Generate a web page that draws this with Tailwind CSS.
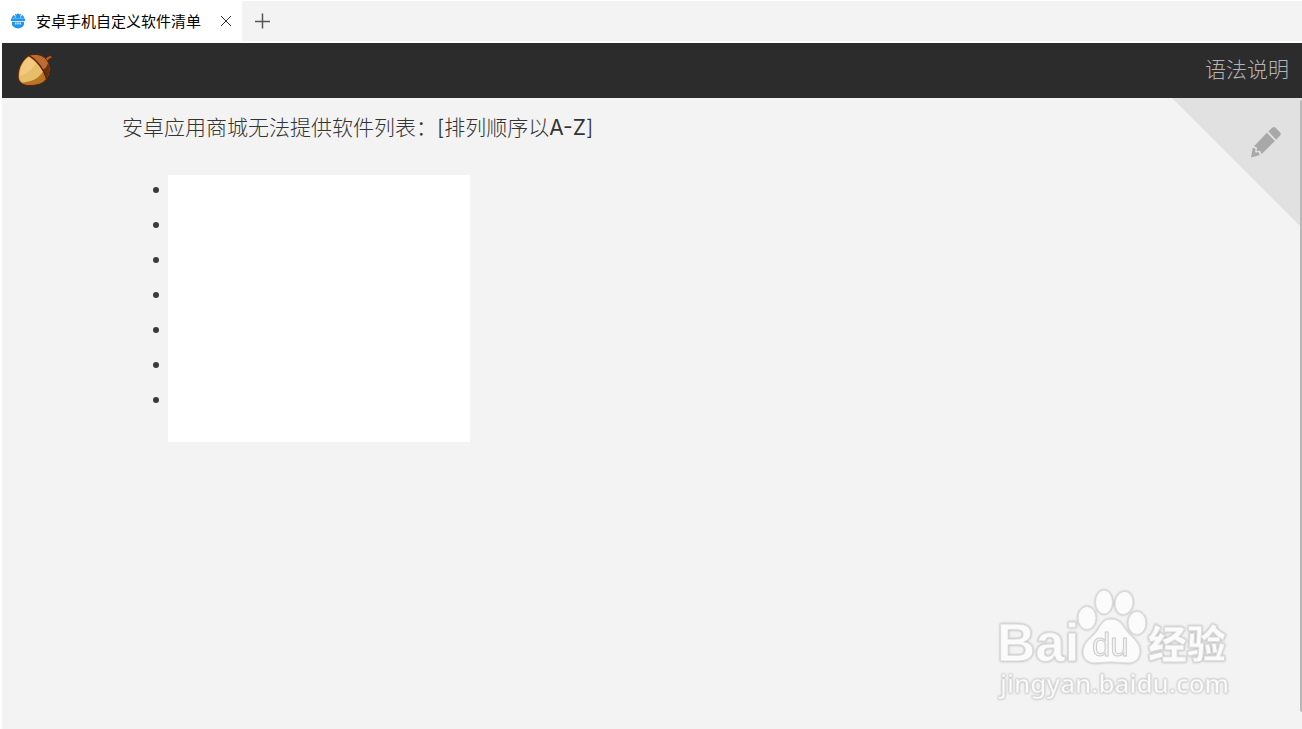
<!DOCTYPE html>
<html lang="zh-CN">
<head>
    <meta charset="UTF-8">
    <meta name="viewport" content="width=device-width, initial-scale=1.0">
    <title>安卓手机自定义软件清单</title>
    <script src="https://cdn.jsdelivr.net/npm/@tailwindcss/browser@4"></script>
</head>
<body class="flex min-h-screen flex-col bg-[#f3f3f3] border-l-2 border-white font-['Inter','Noto_Sans_CJK_SC',sans-serif]">
    <!-- Browser tabs -->
    <div class="flex h-[43px] items-stretch border-t border-b-2 border-white bg-[#f3f3f3]">
        <div class="flex w-60 items-center bg-white pl-[9px] text-[15px] text-black">
            <svg class="h-4 w-[14px]" viewBox="0 0 14 16" fill="#2196f3" aria-hidden="true">
                <path d="M1 5.500V4l1.500-2 1.300 1 .4-2.200 1.300.6L7 .2l1.500 1.200 1.300-.6.4 2.200 1.300-1L13 4v1.500z"/>
                <path d="M0 5.500h14V8H0z"/>
                <path d="M1 8.800h12v2.700C12.500 14 10 15 7 15.500 4 15 1.500 14 1 11.500z"/>
                <path d="M4 9.500h1.500v2H4zM6.300 9.500h1.400v2H6.300zM8.500 9.500H10v2H8.500z" fill="#d6ecff"/>
                <path d="M4.300 2v3M9.700 2v3" stroke="#fff" stroke-width=".6"/>
            </svg>
            <span class="ml-[11px] font-['Noto_Sans_CJK_SC',sans-serif]">安卓手机自定义软件清单</span>
            <button class="ml-auto mr-[10px]" aria-label="关闭标签页">
                <svg class="h-3 w-3" viewBox="0 0 12 12" fill="none" stroke="#333"><path d="M1 1l10 10M11 1L1 11"/></svg>
            </button>
        </div>
        <button class="ml-3" aria-label="新建标签页">
            <svg class="h-4 w-4" viewBox="0 0 16 16" fill="none" stroke="#555" stroke-width="1.500"><path d="M8.500 .5v15M1 8.500h15"/></svg>
        </button>
    </div>

    <header class="flex h-[55px] items-center justify-between bg-[#2c2c2c] pl-[15px] pr-[13px]">
        <a href="#" aria-label="首页">
            <svg class="h-[34px] w-9" viewBox="0 0 36 34" aria-hidden="true">
                <path d="M27 7c1.500-3 3.500-5 7-5.500l1.500 2.200c-3 .4-4.500 2-5.500 5z" fill="#b5652b" stroke="#5b210b"/>
                <path d="M12 1.500C17 -.3 23 0 27.500 3.500c4.500 4 6.500 10 5 15.500-.6 2.500-1.500 4-3 6.500z" fill="#bd6c30" stroke="#5b210b"/>
                <path d="M31 9c2 4 2 11-1.500 15.500L25 16c3-1 5-3.500 6-7z" fill="#6d300d"/>
                <path d="M12 1.500C5 6 1 14 1 22c0 6 4 9.500 11 9.500 8 0 14-1.500 17.500-6.500C27 15 20 6 12 1.500z" fill="#b87526" stroke="#5b210b"/>
                <path d="M12 2.500C6 6.500 2 14 2 22c0 3 1 5 3 6.500 9-.5 17-4 21-11C22.500 11 17 6 12 2.500z" fill="#e6bd69"/>
                <path d="M11 3.500C6 8 3 13 3 22c5-1 12-6 16-13-2-2-5-4.500-8-5.500z" fill="#f3c97d"/>
                <path d="M12 1.500c8 4.500 15 14 17.500 23" fill="none" stroke="#5b210b" stroke-width="1.300"/>
            </svg>
        </a>
        <a href="#" class="pb-1 font-['Noto_Sans_CJK_SC',sans-serif] text-[21px] font-light text-[#b4b4b4]">语法说明</a>
    </header>

    <main class="relative grow overflow-hidden">
        <h1 class="ml-[120px] pt-[14px] text-[21px] leading-8 font-light text-[#333]">安卓应用商城无法提供软件列表：[排列顺序以<span class="font-normal">A-Z</span>]</h1>
        <div class="mt-[31px] ml-[166px] w-[302px] bg-white pb-[22px]">
            <ul class="ml-1 list-disc font-['Open_Sans',sans-serif] text-[17px] text-[#3a3a3a]">
                <li class="h-[35px] leading-[30px]">&nbsp;</li>
                <li class="h-[35px] leading-[30px]">&nbsp;</li>
                <li class="h-[35px] leading-[30px]">&nbsp;</li>
                <li class="h-[35px] leading-[30px]">&nbsp;</li>
                <li class="h-[35px] leading-[30px]">&nbsp;</li>
                <li class="h-[35px] leading-[30px]">&nbsp;</li>
                <li class="h-[35px] leading-[30px]">&nbsp;</li>
            </ul>
        </div>

        <!-- Edit corner -->
        <button class="absolute top-0 right-0" aria-label="编辑">
            <svg class="h-[130px] w-[130px]" viewBox="0 0 130 130">
                <path d="M0 0h130v130z" fill="#e1e1e1"/>
                <g fill="#a8a8a8">
                    <path d="M96.300 33.300l4.200-3.700q1.400-1 2.900 0l4.800 4.800q1.200 1.700 0 3.200l-4 4.200z"/>
                    <path d="M94.900 34.700l8 8.400-13.200 12.800-1.600-3.200-3.400.3.300-3.600-3-1.200z"/>
                    <path d="M80.700 49.800l2.800 1-.4 3.600 3.500-.2 1.200 2.700-8.700 2.500z"/>
                </g>
            </svg>
        </button>
        <div class="absolute top-[2px] right-0 bottom-[17px] w-[2px] rounded-l bg-[#b8b8b8]"></div>

        <!-- Watermark -->
        <svg class="absolute right-[66px] bottom-[20px] h-[122px] w-[240px] drop-shadow-[0_0_1px_#aaaaaa]" viewBox="0 0 240 122" fill="#fbfbfb" stroke="#dcdcdc" stroke-width="1">
            <ellipse cx="91" cy="31" rx="9" ry="11.500"/>
            <ellipse cx="108" cy="15" rx="8.500" ry="12"/>
            <ellipse cx="128" cy="16" rx="9" ry="11.500" transform="rotate(8 128 16)"/>
            <ellipse cx="141" cy="36" rx="9" ry="11.500"/>
            <path d="M115 32c8 0 11 5 15 11 5 7 14 12 14 21 0 8-5 12-12 12-6 0-11-1-17-1s-11 1-16 1c-7 0-12-4-12-11 0-10 9-14 14-21 4-6 6-12 14-12z"/>
            <text x="1" y="74" font-family="Liberation Sans, sans-serif" font-size="53" font-weight="700">Bai</text>
            <text x="96" y="69" font-family="Liberation Sans, sans-serif" font-size="33" fill="#f3f3f3" stroke="#cccccc">du</text>
            <text x="152" y="71" font-family="Noto Sans CJK SC, sans-serif" font-size="39" font-weight="900">经验</text>
            <text x="4" y="106" font-family="Noto Sans, sans-serif" font-size="26" font-weight="500" stroke-width=".5">jingyan.baidu.com</text>
        </svg>
    </main>
</body>
</html>
